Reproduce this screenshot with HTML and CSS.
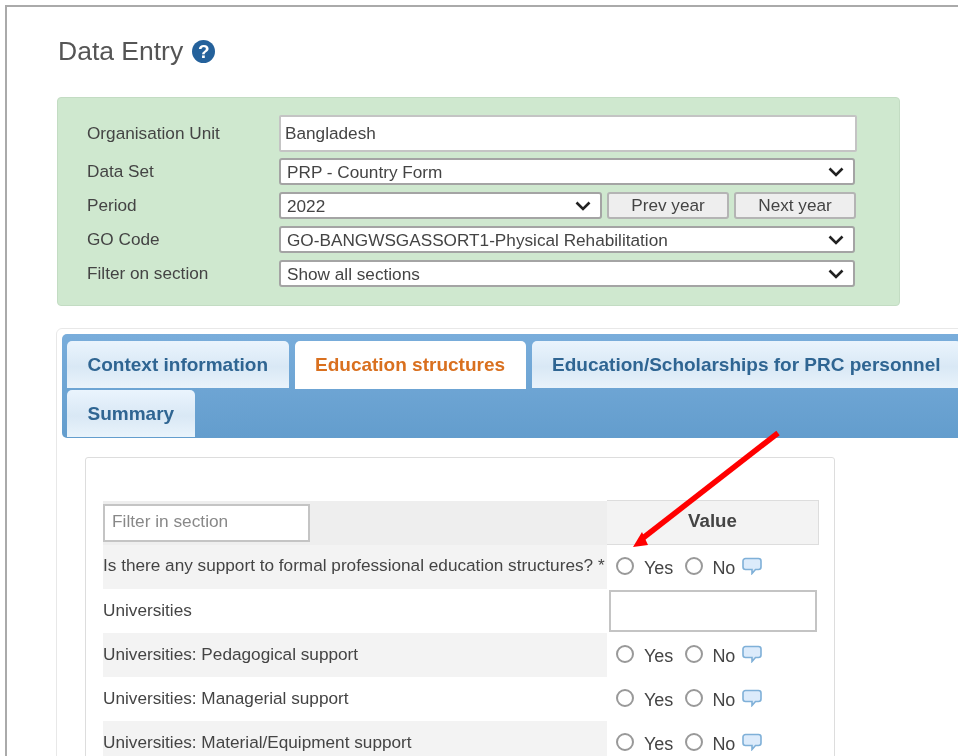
FILE: index.html
```html
<!DOCTYPE html>
<html>
  <head>
    <meta charset="UTF-8" />
    <title>Data Entry</title>
    <link rel="stylesheet" href="styles.css">
  </head>
  <body>
    <svg class="defs" width="0" height="0">
      <symbol id="bubble" viewBox="0 0 20 18">
        <path d="M3.500 1.500h13a2.500 2.500 0 0 1 2.500 2.500v6a2.500 2.500 0 0 1-2.500 2.500h-3l-3.500 4v-4h-6.500a2.500 2.500 0 0 1-2.500-2.500v-6a2.500 2.500 0 0 1 2.500-2.500z" />
      </symbol>
    </svg>
    <div class="frame">
      <h1 class="title">Data Entry <span class="help">?</span></h1>

      <div class="selection">
        <label class="sel-label">Organisation Unit</label>
        <input class="unit" type="text" value="Bangladesh" />

        <label class="sel-label">Data Set</label>
        <select class="pick"><option>PRP - Country Form</option></select>

        <label class="sel-label">Period</label>
        <div class="period">
          <select class="pick year"><option>2022</option></select>
          <button class="year-btn">Prev year</button>
          <button class="year-btn">Next year</button>
        </div>

        <label class="sel-label">GO Code</label>
        <select class="pick"><option>GO-BANGWSGASSORT1-Physical Rehabilitation</option></select>

        <label class="sel-label">Filter on section</label>
        <select class="pick"><option>Show all sections</option></select>
      </div>

      <div class="widget">
        <ul class="tabs">
          <li class="tab">Context information</li>
          <li class="tab active">Education structures</li>
          <li class="tab">Education/Scholarships for PRC personnel</li>
          <li class="tab">Summary</li>
        </ul>

        <div class="card">
          <table class="entry">
            <tr class="head">
              <th class="name"><input class="filter" type="text" placeholder="Filter in section" /></th>
              <th class="value">Value</th>
            </tr>
            <tr class="odd">
              <td class="name">Is there any support to formal professional education structures? *</td>
              <td class="cell">
                <div class="choice">
                  <input class="radio" type="radio" name="r1" /><span class="opt yes">Yes</span>
                  <input class="radio" type="radio" name="r1" /><span class="opt no">No</span>
                  <svg class="note"><use href="#bubble" /></svg>
                </div>
              </td>
            </tr>
            <tr>
              <td class="name">Universities</td>
              <td class="cell"><input class="num" type="text" /></td>
            </tr>
            <tr class="odd">
              <td class="name">Universities: Pedagogical support</td>
              <td class="cell">
                <div class="choice">
                  <input class="radio" type="radio" name="r2" /><span class="opt yes">Yes</span>
                  <input class="radio" type="radio" name="r2" /><span class="opt no">No</span>
                  <svg class="note"><use href="#bubble" /></svg>
                </div>
              </td>
            </tr>
            <tr>
              <td class="name">Universities: Managerial support</td>
              <td class="cell">
                <div class="choice">
                  <input class="radio" type="radio" name="r3" /><span class="opt yes">Yes</span>
                  <input class="radio" type="radio" name="r3" /><span class="opt no">No</span>
                  <svg class="note"><use href="#bubble" /></svg>
                </div>
              </td>
            </tr>
            <tr class="odd">
              <td class="name">Universities: Material/Equipment support</td>
              <td class="cell">
                <div class="choice">
                  <input class="radio" type="radio" name="r4" /><span class="opt yes">Yes</span>
                  <input class="radio" type="radio" name="r4" /><span class="opt no">No</span>
                  <svg class="note"><use href="#bubble" /></svg>
                </div>
              </td>
            </tr>
          </table>
        </div>
      </div>

      <svg class="arrow" viewBox="0 0 160 125">
        <line x1="153" y1="8" x2="18" y2="113" />
        <polygon points="8,122 23,120 17,107" />
      </svg>
    </div>
  </body>
</html>
```

FILE: styles.css
```css
html,
body {
  height: 100%;
}
body {
  margin: 0;
  overflow: hidden;
  background: #fff;
  color: #444;
  font-family: "Liberation Sans", Arial, sans-serif;
  font-size: 17.2px;
}
.defs {
  position: absolute;
}
/* the source picture is a soft, rescaled capture */
.frame {
  position: relative;
  box-sizing: border-box;
  width: 1100px;
  height: 900px;
  margin: 5px 0 0 5px;
  padding: 27px 0 0 50px;
  border: 2px solid #aaa;
  filter: blur(0.5px);
}

.title {
  display: flex;
  align-items: center;
  gap: 9px;
  height: 34px;
  margin: 0 0 29px 1px;
  color: #555;
  font-size: 26.5px;
  font-weight: normal;
}
.help {
  width: 23px;
  height: 23px;
  border-radius: 50%;
  background: #24619b;
  color: #fff;
  font-size: 19px;
  font-weight: bold;
  line-height: 23px;
  text-align: center;
}

.selection {
  display: grid;
  grid-template-columns: 192px 576px;
  row-gap: 7px;
  align-items: center;
  align-content: start;
  box-sizing: border-box;
  width: 843px;
  height: 209px;
  padding: 17px 0 0 29px;
  border: 1px solid #c3dcc3;
  border-radius: 4px;
  background: #cfe8cf;
}
.sel-label {
  color: #444;
}
.unit {
  box-sizing: border-box;
  width: 578px;
  height: 37px;
  margin-bottom: -1px;
  padding: 0 4px;
  border: 2px solid #c4c4c4;
  border-radius: 2px;
  color: #444;
  font: 17.2px "Liberation Sans", Arial, sans-serif;
}
.pick {
  appearance: none;
  box-sizing: border-box;
  width: 576px;
  height: 27px;
  padding: 0 6px;
  border: 2px solid #a4a4a4;
  border-radius: 3px;
  background: #fff url("data:image/svg+xml,%3Csvg xmlns='http://www.w3.org/2000/svg' width='16' height='10'%3E%3Cpath d='M1.5 1.5L8 8l6.5-6.5' fill='none' stroke='%23222' stroke-width='2.6'/%3E%3C/svg%3E") no-repeat right 9px center;
  color: #444;
  font: 17.2px "Liberation Sans", Arial, sans-serif;
}
.period {
  display: flex;
  gap: 5px;
  width: 578px;
  height: 27px;
}
.pick.year {
  width: 323px;
}
.year-btn {
  width: 122px;
  height: 27px;
  padding: 0;
  border: 2px solid #b4b4b4;
  border-radius: 3px;
  background: #eee;
  color: #444;
  font: 17.2px "Liberation Sans", Arial, sans-serif;
}

.widget {
  width: 1000px;
  margin: 22px 0 0 -1px;
  padding: 5px;
  border: 1px solid #e8e8e8;
  border-radius: 6px;
}
.tabs {
  display: flex;
  flex-wrap: wrap;
  gap: 1px 6px;
  width: 955px;
  margin: 0;
  padding: 7px 0 1px 5px;
  border-radius: 5px;
  background: linear-gradient(#79addb, #639dcd);
  list-style: none;
}
.tab {
  box-sizing: border-box;
  height: 47px;
  padding: 0 20.5px;
  border-radius: 5px 5px 0 0;
  background: linear-gradient(#eaf4fd, #d9e8f5 55%, #e9f3fb);
  color: #2f6592;
  font-size: 19px;
  font-weight: bold;
  line-height: 47px;
}
.tab.active {
  height: 48px;
  background: #fff;
  color: #d9701f;
}

.card {
  box-sizing: border-box;
  width: 750px;
  margin: 19px 0 0 23px;
  padding: 42px 15px 0 17px;
  border: 1px solid #ddd;
  border-radius: 3px;
}
.entry {
  width: 716px;
  border-collapse: collapse;
  table-layout: fixed;
}
.entry td,
.entry th {
  height: 44px;
  padding: 0;
}
.entry .head th {
  height: 43px;
}
.name {
  width: 504px;
  color: #444;
  font-weight: normal;
  text-align: left;
}
.entry td.name {
  padding-bottom: 2px;
  height: 42px;
}
.odd .name {
  background: #f3f3f3;
}
.head .name {
  background: #eee;
}
.entry .head .value {
  height: 40px;
  padding-bottom: 3px;
  border: 1px solid #ddd;
  border-left: 0;
  background: #f3f3f3;
  color: #444;
  font-size: 18.7px;
  font-weight: bold;
}
.filter {
  display: block;
  box-sizing: border-box;
  width: 207px;
  height: 38px;
  padding: 0 7px 3px;
  border: 2px solid #c4c4c4;
  background: #fff;
  font: 17.3px "Liberation Sans", Arial, sans-serif;
}
.filter::placeholder {
  color: #888;
}
.entry .cell {
  padding-left: 9px;
}
.choice {
  display: flex;
  align-items: center;
  margin-bottom: 2px;
}
.radio {
  appearance: none;
  box-sizing: border-box;
  width: 18px;
  height: 18px;
  margin: 0;
  border: 2px solid #999;
  border-radius: 50%;
  background: #fff;
}
.opt {
  padding-top: 5px;
  font-size: 18px;
}
.opt.yes {
  margin: 0 12px 0 10px;
}
.opt.no {
  margin: 0 7px 0 9px;
}
.note {
  width: 20px;
  height: 18px;
  fill: #dcebfb;
  stroke: #7fb0d8;
  stroke-width: 1.6;
}
.num {
  display: block;
  box-sizing: border-box;
  width: 208px;
  height: 42px;
  margin-left: -7px;
  border: 2px solid #c4c4c4;
  background: #fff;
}

/* red annotation drawn over the form */
.arrow {
  position: absolute;
  left: 618px;
  top: 418px;
  width: 160px;
  height: 125px;
}
.arrow line {
  stroke: #f00;
  stroke-width: 5.5;
}
.arrow polygon {
  fill: #f00;
}
```
